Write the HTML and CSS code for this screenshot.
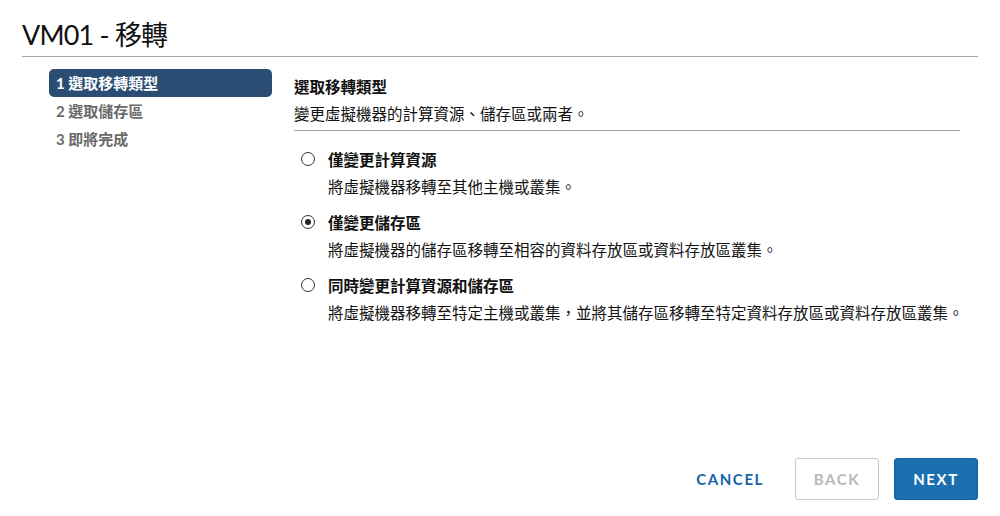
FILE: index.html
```html
<!DOCTYPE html>
<html lang="zh-Hant">
<head>
  <meta charset="UTF-8" />
  <meta name="viewport" content="width=device-width, initial-scale=1.0"/>
  <title>VM01 - 移轉</title>
  <link rel="stylesheet" href="styles.css">
</head>
<body>
  <div class="page">
    <div class="header">
      <h1>VM01 - 移轉</h1>
    </div>

    <div class="main-flex">
      <div class="steps">
        <div class="step active">1 選取移轉類型</div>
        <div class="step">2 選取儲存區</div>
        <div class="step">3 即將完成</div>
      </div>

      <div class="content">
        <div class="content-head">
          <h3>選取移轉類型</h3>
          <p>變更虛擬機器的計算資源、儲存區或兩者。</p>
        </div>

        <label class="option">
          <span class="option-row">
            <input type="radio" name="migrate" value="compute" />
            <span class="radio"></span>
            <span class="option-title">僅變更計算資源</span>
          </span>
          <span class="option-desc">將虛擬機器移轉至其他主機或叢集。</span>
        </label>

        <label class="option">
          <span class="option-row">
            <input type="radio" name="migrate" value="storage" checked />
            <span class="radio"></span>
            <span class="option-title">僅變更儲存區</span>
          </span>
          <span class="option-desc">將虛擬機器的儲存區移轉至相容的資料存放區或資料存放區叢集。</span>
        </label>

        <label class="option">
          <span class="option-row">
            <input type="radio" name="migrate" value="both" />
            <span class="radio"></span>
            <span class="option-title">同時變更計算資源和儲存區</span>
          </span>
          <span class="option-desc">將虛擬機器移轉至特定主機或叢集，並將其儲存區移轉至特定資料存放區或資料存放區叢集。</span>
        </label>
      </div>
    </div>

    <div class="footer">
      <button class="btn btn-link">CANCEL</button>
      <button class="btn btn-outline" disabled>BACK</button>
      <button class="btn btn-primary">NEXT</button>
    </div>
  </div>
</body>
</html>
```

FILE: styles.css
```css
body {
  margin: 0;
  background: #fff;
  font-family: Lato, "Noto Sans CJK TC", sans-serif;
  color: #222;
}

.page {
  height: 516px;
  display: flex;
  flex-direction: column;
  padding: 0 22px;
  box-sizing: border-box;
}

.header {
  padding-top: 18px;
  padding-bottom: 4px;
  border-bottom: 1px solid #a8a8a8;
}

.header h1 {
  margin: 0;
  font-size: 27px;
  line-height: 34px;
  font-weight: 400;
  letter-spacing: -0.8px;
  color: #111;
}

.main-flex {
  flex: 1;
  display: flex;
  gap: 22px;
}

.steps {
  width: 223px;
  margin-left: 27px;
  padding-top: 12px;
}

.step {
  height: 28px;
  line-height: 28px;
  padding-left: 7px;
  font-size: 15px;
  font-weight: 700;
  color: #6a6a6a;
  border-radius: 5px;
}

.step.active {
  background: #2b4d73;
  color: #fff;
}

.content {
  width: 666px;
  padding-top: 16px;
}

.content-head {
  padding-bottom: 3px;
  border-bottom: 1px solid #a8a8a8;
  margin-bottom: 14px;
}

.content-head h3 {
  margin: 0;
  font-size: 15.5px;
  line-height: 28px;
  font-weight: 700;
  color: #111;
}

.content-head p {
  margin: 0;
  font-size: 15.5px;
  line-height: 26px;
  color: #111;
}

.option {
  display: flex;
  flex-direction: column;
  margin-bottom: 7px;
  cursor: pointer;
}

.option-row {
  display: flex;
  align-items: center;
  height: 28px;
  padding-left: 7px;
}

.option-row input {
  display: none;
}

.radio {
  width: 14px;
  height: 14px;
  border: 1.5px solid #333;
  border-radius: 50%;
  box-sizing: border-box;
  margin-right: 13px;
  position: relative;
}

.option-row input:checked + .radio::after {
  content: "";
  position: absolute;
  left: 2.5px;
  top: 2.5px;
  width: 6px;
  height: 6px;
  border-radius: 50%;
  background: #222;
}

.option-title {
  font-size: 15.5px;
  font-weight: 700;
  color: #111;
}

.option-desc {
  height: 28px;
  line-height: 28px;
  padding-left: 34px;
  font-size: 15.5px;
  white-space: nowrap;
  color: #111;
}

.footer {
  display: flex;
  justify-content: flex-end;
  align-items: center;
  gap: 15px;
  padding-bottom: 16px;
}

.btn {
  height: 42px;
  min-width: 84px;
  padding: 0 12px;
  border-radius: 3px;
  font-family: Lato, sans-serif;
  font-size: 15px;
  font-weight: 700;
  letter-spacing: 1.6px;
  cursor: pointer;
}

.btn-link {
  background: none;
  border: none;
  color: #1565a8;
  margin-right: 4px;
}

.btn-outline {
  background: #fff;
  border: 1px solid #c8c8c8;
  color: #b8b8b8;
}

.btn-primary {
  background: #1a6faf;
  border: 1px solid #16609a;
  color: #fff;
}
```
